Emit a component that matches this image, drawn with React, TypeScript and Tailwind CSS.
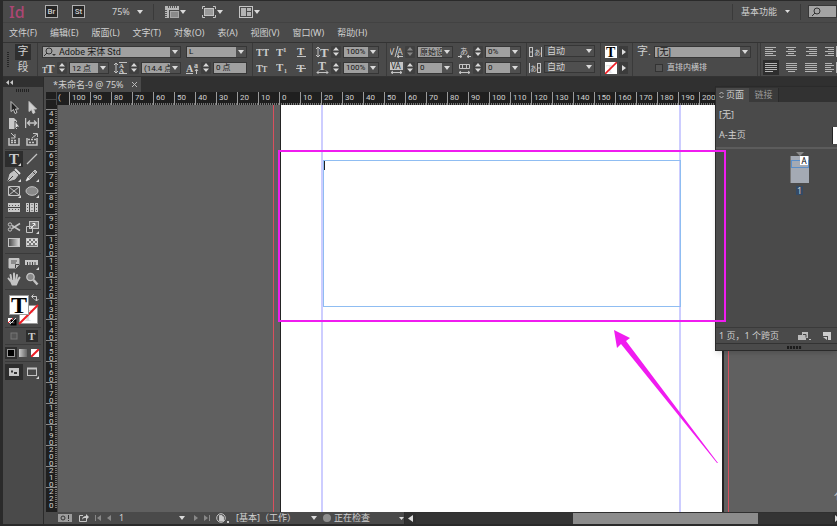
import React from 'react'

const MENUS = ['文件(F)', '编辑(E)', '版面(L)', '文字(T)', '对象(O)', '表(A)', '视图(V)', '窗口(W)', '帮助(H)']

const H_MARKS = [100, 90, 80, 70, 60, 50, 40, 30, 20, 10, 0, 10, 20, 30, 40, 50, 60, 70, 80, 90, 100, 110, 120, 130, 140, 150, 160, 170, 180, 190, 200, 210, 220, 230, 240, 250]
const V_MARKS = Array.from({ length: 19 }, (_, i) => 40 + i * 10)

interface IconProps {
  children: React.ReactNode
  w?: number
  h?: number
}

const Icon: React.FC<IconProps> = ({ children, w = 14, h = 14 }) => (
  <svg width={w} height={h} viewBox={`0 0 ${w} ${h}`} fill="none" stroke="#c4c4c4" strokeWidth="1" className="shrink-0" aria-hidden="true">
    {children}
  </svg>
)

interface GlyphProps {
  x: number
  y: number
  size: number
  children: string
  sans?: boolean
  fill?: string
}

const Glyph: React.FC<GlyphProps> = ({ x, y, size, children, sans, fill = '#cccccc' }) => (
  <text x={x} y={y} fontSize={size} fill={fill} stroke="none" fontFamily={sans ? 'Noto Sans, Noto Sans CJK SC, sans-serif' : 'Liberation Serif, serif'} fontWeight={sans ? 400 : 700}>
    {children}
  </text>
)

const Caret = () => (
  <svg width="6" height="4" viewBox="0 0 6 4" className="shrink-0" aria-hidden="true">
    <path d="M0 0h6L3 4z" fill="#dadada" />
  </svg>
)

const Corner = () => <path d="M14 11v3h-3z" fill="#d8d8d8" stroke="none" />

const Spinner = ({ label, dim = false }: { label: string; dim?: boolean }) => (
  <button aria-label={label} className="flex h-3 w-[10px] shrink-0 items-center justify-center rounded-[1px] bg-[#404040]">
    <svg width="6" height="9" viewBox="0 0 6 9" aria-hidden="true">
      <path d="M0 3.5L3 0l3 3.5zM0 5.5L3 9l3-3.5z" fill={dim ? '#858585' : '#d8d8d8'} />
    </svg>
  </button>
)

interface ComboProps {
  label: string
  value: string
  width: string
  pad?: string
  icon?: React.ReactNode
}

const Combo: React.FC<ComboProps> = ({ label, value, width, pad = 'pl-[2px]', icon }) => (
  <div className={`flex h-3 shrink-0 border border-[#363636] bg-[#a0a0a0] ${width}`}>
    {icon}
    <input aria-label={label} defaultValue={value} className={`h-full min-w-0 flex-1 bg-transparent text-[#161616] outline-none ${pad}`} />
    <button aria-label={`${label}列表`} className="flex w-[10px] shrink-0 items-center justify-center bg-[#505050]">
      <Caret />
    </button>
  </div>
)

const Group = ({ children, className = 'px-1' }: { children: React.ReactNode; className?: string }) => (
  <div className={`flex shrink-0 flex-col justify-center gap-1 border-r border-[#3a3a3a] ${className}`}>{children}</div>
)

const Row = ({ children, gap = 'gap-[5px]' }: { children: React.ReactNode; gap?: string }) => (
  <div className={`flex h-3 items-center ${gap}`}>{children}</div>
)

const Field = ({ children }: { children: React.ReactNode }) => <div className="flex items-center gap-[2px]">{children}</div>

const TypeButton = ({ label, children }: { label: string; children: React.ReactNode }) => (
  <button aria-label={label}>
    <Icon w={13} h={12}>{children}</Icon>
  </button>
)

const AlignButton = ({ label, d, active = false }: { label: string; d: string; active?: boolean }) => (
  <button aria-label={label} className={active ? 'bg-[#2e2e2e] outline-2 outline-[#2e2e2e]' : ''}>
    <Icon w={12} h={11}>
      <path d={d} stroke="#b4b4b4" />
    </Icon>
  </button>
)

const AppBar = () => (
  <header className="flex h-[22px] shrink-0 items-center border-b border-[#424242] pl-[6px] text-[9px]">
    <span className="w-[36px] text-[16px] leading-none font-medium text-[#ad4674]">Id</span>
    <button className="mr-[14px] h-[13px] w-[13px] border border-[#b0b0b0] bg-[#262626] font-['Roboto',sans-serif] text-[8px] leading-[11px] font-medium text-[#cfcfcf]">Br</button>
    <button className="h-[13px] w-[13px] border border-[#b0b0b0] bg-[#262626] font-['Roboto',sans-serif] text-[8px] leading-[11px] font-medium text-[#cfcfcf]">St</button>
    <button className="ml-[27px] flex items-center gap-[7px]">75%<Caret /></button>
    <span className="mr-[11px] ml-[10px] h-4 w-px bg-[#3a3a3a]" />
    <button aria-label="视图选项" className="mr-4 flex items-center gap-[1px]">
      <Icon w={14} h={12}>
        <path d="M0 0h14v4H4v8H0z" fill="#b8b8b8" stroke="none" />
        <path d="M3.500 0v2M5.500 0v2M7.500 0v2M9.500 0v2M11.500 0v2M0 4.500h2M0 6.500h2M0 8.500h2M0 10.500h2" stroke="#555" />
        <rect x="5.500" y="5.500" width="8" height="6" fill="#8a8a8a" stroke="#a8a8a8" />
      </Icon>
      <Caret />
    </button>
    <button aria-label="屏幕模式" className="mr-4 flex items-center gap-[1px]">
      <Icon w={14} h={12}>
        <path d="M.5 3V.5H3M11 .5h2.500V3M13.500 9v2.500H11M3 11.500H.5V9" />
        <rect x="2.500" y="2.500" width="9" height="7" fill="#9a9a9a" />
      </Icon>
      <Caret />
    </button>
    <button aria-label="排列文档" className="flex items-center gap-[1px]">
      <Icon w={14} h={12}>
        <rect x=".5" y=".5" width="13" height="11" />
        <path d="M2 2h5v8H2zM8 2h4v3H8zM8 6h4v4H8z" fill="#b4b4b4" stroke="none" />
      </Icon>
      <Caret />
    </button>
    <button className="ml-auto flex h-4 items-center gap-2 border-x border-[#3a3a3a] pr-[10px] pl-2">
      基本功能
      <svg width="5" height="3" viewBox="0 0 5 3" aria-hidden="true"><path d="M0 0h5L2.500 3z" fill="#ddd" /></svg>
    </button>
    <label className="ml-[7px] flex h-[13px] w-[29px] items-center overflow-hidden border border-[#383838] bg-[#a4a4a4] pl-[2px]">
      <Icon w={10} h={10}><circle cx="6" cy="4" r="3" stroke="#333" /><path d="M4 6L1 9" stroke="#333" /></Icon>
      <input aria-label="搜索" className="w-4 bg-transparent outline-none" />
    </label>
  </header>
)

const ControlPanel = () => (
  <section aria-label="控制" className="flex h-[35px] shrink-0 overflow-hidden border-y border-[#333333] font-['Roboto','Noto_Sans_CJK_SC',sans-serif] text-[8px]">
    <div className="my-auto ml-1 h-4 w-[2px] shrink-0 bg-[repeating-linear-gradient(#242424_0_1px,#4a4a4a_1px_2px)]" />
    <div className="ml-[6px] flex shrink-0 flex-col justify-center border-r border-[#3a3a3a] pr-[6px] text-[11px]">
      <button className="h-4 w-4 bg-[#2f2f2f] leading-[14px]">字</button>
      <button className="h-4 w-4 leading-[15px]">段</button>
    </div>
    <Group className="pl-1 pr-[5px]">
      <Row>
        <Combo
          label="字体"
          value="Adobe 宋体 Std"
          width="w-[139px]"
          pad="pl-[3px] text-[9px]"
          icon={<Icon w={13} h={10}><circle cx="6" cy="4" r="3" stroke="#333" /><path d="M4 6L1 9" stroke="#333" /><path d="M9 7h4l-2 2z" fill="#333" stroke="none" /></Icon>}
        />
        <Combo label="字体样式" value="L" width="w-[61px]" />
      </Row>
      <Row>
        <Field>
          <Icon w={13} h={12}><Glyph x={4} y={11} size={13}>T</Glyph><Glyph x={0} y={11} size={8}>T</Glyph></Icon>
          <Spinner label="字号增减" />
          <Combo label="字号" value="12 点" width="w-[40px]" />
        </Field>
        <Field>
          <Icon w={13} h={12}><path d="M5 .5h8M5 11.500h8M2 1v10M0 3l2-2 2 2M0 9l2 2 2-2" /><Glyph x={5} y={6} size={7}>A</Glyph><Glyph x={5} y={11} size={7}>A</Glyph></Icon>
          <Spinner label="行距增减" />
          <Combo label="行距" value="(14.4 点)" width="w-[40px]" />
        </Field>
        <Field>
          <Icon w={13} h={12}><Glyph x={0} y={10} size={10}>A</Glyph><Glyph x={8} y={6} size={8}>a</Glyph><path d="M10.500 12V7.500M9 9l1.500-2L12 9M0 11.500h7" /></Icon>
          <Spinner label="基线偏移增减" />
          <input aria-label="基线偏移" defaultValue="0 点" className="h-3 w-[34px] border border-[#363636] bg-[#a0a0a0] px-[2px] text-[#161616] outline-none" />
        </Field>
      </Row>
    </Group>
    <Group className="px-[3px]">
      <Row gap="gap-[7px]">
        <TypeButton label="全部大写字母"><Glyph x={0} y={10} size={10}>TT</Glyph></TypeButton>
        <TypeButton label="上标"><Glyph x={0} y={10} size={11}>T</Glyph><Glyph x={7} y={6} size={7}>1</Glyph></TypeButton>
        <TypeButton label="下划线"><Glyph x={1} y={9} size={11}>T</Glyph><path d="M1 10.500h9" /></TypeButton>
      </Row>
      <Row gap="gap-[7px]">
        <TypeButton label="小型大写字母"><Glyph x={0} y={10} size={10}>T</Glyph><Glyph x={6} y={10} size={8}>T</Glyph></TypeButton>
        <TypeButton label="下标"><Glyph x={0} y={9} size={11}>T</Glyph><Glyph x={8} y={11} size={6}>1</Glyph></TypeButton>
        <TypeButton label="删除线"><Glyph x={1} y={10} size={11}>T</Glyph><path d="M0 6.500h10" /></TypeButton>
      </Row>
    </Group>
    <Group className="pl-[3px] pr-[7px]">
      <Row>
        <Field>
          <Icon w={13} h={12}><Glyph x={4} y={11} size={13}>T</Glyph><path d="M2 1v10M0 3l2-2 2 2M0 9l2 2 2-2" /></Icon>
          <Spinner label="垂直缩放增减" />
          <Combo label="垂直缩放" value="100%" width="w-[36px]" />
        </Field>
      </Row>
      <Row>
        <Field>
          <Icon w={13} h={12}><Glyph x={2} y={8} size={12}>T</Glyph><path d="M1 10.500h11M3 8.500l-2 2 2 2M10 8.500l2 2-2 2" /></Icon>
          <Spinner label="水平缩放增减" />
          <Combo label="水平缩放" value="100%" width="w-[36px]" />
        </Field>
      </Row>
    </Group>
    <Group className="pl-[3px] pr-[5px]">
      <Row>
        <Field>
          <Icon w={13} h={12}><Glyph x={-1} y={9} size={9} sans>V</Glyph><Glyph x={7} y={9} size={9} sans>A</Glyph><path d="M8 0L5 11M7 10.500h6M9 9l-2 1.500 2 1.500" /></Icon>
          <Spinner label="字偶间距增减" dim />
          <Combo label="字偶间距" value="原始设定" width="w-[36px]" />
        </Field>
        <Field>
          <Icon w={13} h={12}><Glyph x={2} y={8} size={8} sans>あ</Glyph><path d="M0 10.500h4M2 9l2 1.500-2 1.500M13 10.500H9M11 9l-2 1.500 2 1.500" /></Icon>
          <Spinner label="比例间距增减" />
          <Combo label="比例间距" value="0%" width="w-[36px]" />
        </Field>
      </Row>
      <Row>
        <Field>
          <Icon w={13} h={12}><rect x="0" y="0" width="13" height="8" fill="#c4c4c4" stroke="none" /><Glyph x={1} y={7} size={8} sans fill="#222">VA</Glyph><path d="M1 10.500h11M3 9l-2 1.500 2 1.500M10 9l2 1.500-2 1.500" /></Icon>
          <Spinner label="字符间距增减" />
          <Combo label="字符间距" value="0" width="w-[36px]" />
        </Field>
        <Field>
          <Icon w={13} h={12}><path d="M1.500 2.500h10v4h-10zM4.500 2.500v4M8.500 2.500v4M1 10.500h11M3 9l-2 1.500 2 1.500M10 9l2 1.500-2 1.500" /></Icon>
          <Spinner label="网格指定格数增减" />
          <Combo label="网格指定格数" value="0" width="w-[36px]" />
        </Field>
      </Row>
    </Group>
    <Group className="pl-[2px] pr-[5px]">
      {['字符前挤压间距', '字符后挤压间距'].map((label, i) => (
        <Row key={label}>
          <Field>
            <Icon w={13} h={12}>
              <rect x={i ? 8.5 : 0.5} y="1.500" width="3" height="9" />
              <path d={i ? 'M.5 1v10M9 6h2' : 'M12.500 1v10M1 6h2'} />
              <Glyph x={i ? 1 : 5} y={9} size={7} sans>あ</Glyph>
            </Icon>
            <div className="relative">
              <select aria-label={label} className="h-3 w-[51px] appearance-none border border-[#363636] bg-[#4f4f4f] pl-[2px] text-[9px] leading-[10px] text-[#d4d4d4] outline-none">
                <option>自动</option>
              </select>
              <span className="pointer-events-none absolute top-1 right-[3px]"><Caret /></span>
            </div>
          </Field>
        </Row>
      ))}
    </Group>
    <Group className="px-1">
      <Row gap="gap-[2px]">
        <button aria-label="填色" className="h-3 w-3 bg-white"><Icon w={12} h={12}><Glyph x={1} y={11} size={14} fill="#000">T</Glyph></Icon></button>
        <button aria-label="填色选项" className="flex h-3 w-[9px] items-center justify-center bg-[#3c3c3c]"><Icon w={4} h={6}><path d="M0 0l4 3-4 3z" fill="#ddd" stroke="none" /></Icon></button>
      </Row>
      <Row gap="gap-[2px]">
        <button aria-label="描边" className="h-3 w-3 bg-white"><Icon w={12} h={12}><Glyph x={1} y={11} size={12} fill="#e4e4e4">T</Glyph><path d="M0 12L12 0" stroke="#ed1c24" strokeWidth="1.600" /></Icon></button>
        <button aria-label="描边选项" className="flex h-3 w-[9px] items-center justify-center bg-[#3c3c3c]"><Icon w={4} h={6}><path d="M0 0l4 3-4 3z" fill="#ddd" stroke="none" /></Icon></button>
      </Row>
    </Group>
    <Group className="pl-1 pr-[6px]">
      <Row>
        <span className="w-[12px] text-[11px] leading-3 whitespace-nowrap">字.</span>
        <Combo label="字符样式" value="[无]" width="w-[97px]" pad="pl-[2px] text-[9px]" />
      </Row>
      <Row>
        <label className="ml-[18px] flex items-center gap-1 whitespace-nowrap">
          <input type="checkbox" className="h-2 w-2 appearance-none border border-[#333333] bg-[#555555]" />
          直排内横排
        </label>
      </Row>
    </Group>
    <div className="ml-[2px] flex shrink-0 flex-col justify-center gap-1 border-l border-[#3a3a3a] pl-1">
      <Row gap="gap-2">
        <AlignButton label="左对齐" d="M0 1.500h11M0 3.500h8M0 5.500h11M0 7.500h8M0 9.500h11" />
        <AlignButton label="居中对齐" d="M1 1.500h10M3 3.500h6M1 5.500h10M3 7.500h6M1 9.500h10" />
        <AlignButton label="右对齐" d="M1 1.500h11M4 3.500h8M1 5.500h11M4 7.500h8M1 9.500h11" />
        <AlignButton label="朝向书脊对齐" d="M0 1.500h9M3 3.500h6M0 5.500h9M3 7.500h6M0 9.500h9M11.500 0v11" />
      </Row>
      <Row gap="gap-2">
        <AlignButton active label="双齐末行齐左" d="M0 1.500h12M0 3.500h12M0 5.500h12M0 7.500h12M0 9.500h8" />
        <AlignButton label="双齐末行居中" d="M1 1.500h11M1 3.500h11M1 5.500h11M1 7.500h11M3 9.500h7" />
        <AlignButton label="全部强制双齐" d="M0 1.500h12M0 3.500h12M0 5.500h12M0 7.500h12M0 9.500h12" />
        <AlignButton label="背向书脊对齐" d="M0 1.500h7M0 3.500h9M0 5.500h6M0 7.500h9M0 9.500h7M11.500 0v11" />
      </Row>
    </div>
  </section>
)

interface Tool {
  name: string
  art: React.ReactNode
  active?: boolean
}

const TOOL_GROUPS: Tool[][] = [
  [
    { name: '选择工具', art: <path d="M4 1.500v10l2.500-2 1.500 4 2-1-1.500-3.500h3z" fill="#222" /> },
    { name: '直接选择工具', art: <path d="M4 1.500v10l2.500-2 1.500 4 2-1-1.500-3.500h3z" fill="#d0d0d0" /> },
    { name: '页面工具', art: <><path d="M2 2h5l3 3v8H2z" fill="#c8c8c8" stroke="none" /><path d="M8 5v8l2-2h3z" fill="#dedede" stroke="#484848" /></> },
    { name: '间隙工具', art: <><path d="M.5 2v10M13.500 2v10" strokeWidth="1.500" /><path d="M3 7h8M5 4.500L2.500 7 5 9.500M9 4.500L11.500 7 9 9.500" strokeWidth="1.300" /></> },
    { name: '内容收集器工具', art: <><path d="M2 6v7h10V6" strokeWidth="1.500" /><path d="M4 8.500h6M4 10.500h6" strokeWidth="1.300" strokeDasharray="2 1" /><path d="M4 1l4 4M8 2v4H4" /></> },
    { name: '内容置入器工具', art: <><path d="M2 6v7h10V6" strokeWidth="1.500" /><path d="M3 7.500h8M4 10.500h6" strokeWidth="1.300" strokeDasharray="2 1" /><path d="M7 6l5-4M8 1.500h4.500V5" /></> },
  ],
  [
    { name: '文字工具', active: true, art: <><Glyph x={2} y={12} size={15}>T</Glyph><Corner /></> },
    { name: '直线工具', art: <path d="M2 12L12 2" strokeWidth="1.300" /> },
    { name: '钢笔工具', art: <><path d="M1 13l2-7 4-3 4 4-3 4z" fill="#c4c4c4" /><path d="M8 1l5 5" stroke="#ddd" strokeWidth="2" /><path d="M1 13l5-5" stroke="#444" /><Corner /></> },
    { name: '铅笔工具', art: <><path d="M1 13l2-4 7-7 2 2-7 7z" fill="#aaa" /><path d="M3 9l2 2M8 4l2 2" stroke="#444" /><path d="M1 13l2-4 2 2z" fill="#eee" stroke="none" /><Corner /></> },
    { name: '矩形框架工具', art: <><path d="M1.500 2.500h11v9h-11zM2 3l10 8M12 3L2 11" /><Corner /></> },
    { name: '椭圆工具', art: <><ellipse cx="7" cy="7" rx="6" ry="4.300" fill="#8a8a8a" /><Corner /></> },
    { name: '水平网格工具', art: <><rect x="1" y="3" width="12" height="9" fill="#c8c8c8" stroke="none" /><path d="M1 7.500h12" stroke="#444" /><path d="M2 5.500h10M2 9.500h10" stroke="#555" strokeDasharray="1 2" /></> },
    { name: '垂直网格工具', art: <><rect x="1" y="3" width="12" height="9" fill="#c8c8c8" stroke="none" /><path d="M4.500 3v9M9.500 3v9" stroke="#444" /><path d="M2.500 4v7M7 4v7M11.500 4v7" stroke="#555" strokeDasharray="1 2" /></> },
  ],
  [
    { name: '剪刀工具', art: <><path d="M5 8.500l8-5M5 5.500l8 5" strokeWidth="1.500" /><circle cx="3" cy="4.500" r="1.700" /><circle cx="3" cy="9.500" r="1.700" /></> },
    { name: '自由变换工具', art: <><rect x="4.500" y="1.500" width="9" height="7" fill="#777" /><path d="M1.500 6.500h6v6h-6z" /><path d="M6 8l4-4M7.500 3.500H10V6" stroke="#eee" /><Corner /></> },
    {
      name: '渐变色板工具',
      art: (
        <>
          <linearGradient id="swatch-fade"><stop stopColor="#444" /><stop offset="1" stopColor="#e0e0e0" /></linearGradient>
          <rect x="1.500" y="2.500" width="11" height="8" fill="url(#swatch-fade)" />
        </>
      ),
    },
    { name: '渐变羽化工具', art: <><rect x="1.500" y="2.500" width="11" height="8" fill="#777" /><path d="M2 4h10M4 6h9M2 8h10" stroke="#ddd" strokeWidth="2" strokeDasharray="2 2" /></> },
  ],
  [
    { name: '附注工具', art: <><path d="M2 2.500h10v6l-3 3.500H2z" fill="#c4c4c4" /><path d="M4 5h6M4 7h5" stroke="#555" /><path d="M8.500 12V8.500H12" stroke="#444" /></> },
    { name: '度量工具', art: <><rect x="0" y="4" width="13" height="5" fill="#c8c8c8" stroke="none" /><path d="M2.500 6v3M5 6v3M7.500 6v3M10 6v3" stroke="#444" /><Corner /></> },
    { name: '抓手工具', art: <path d="M3.500 9L1.500 6.500M4.500 8L3.500 3M7 7.500V1.500M9 8l1-5M10.500 9l2-3.500M5.500 12.500L4 9h6.500l-1.500 3.500z" fill="#c4c4c4" strokeWidth="2" strokeLinecap="round" strokeLinejoin="round" /> },
    { name: '缩放显示工具', art: <><circle cx="5.500" cy="5" r="3.700" fill="#888" strokeWidth="1.300" /><path d="M8.500 8l4 4.500" strokeWidth="2.500" /></> },
  ],
]

const ToolPanel = () => (
  <aside aria-label="工具" className="flex w-[41px] shrink-0 flex-col border-r border-[#2b2b2b]">
    <div className="flex h-[10px] items-center bg-[#303030] pl-[3px]">
      <Icon w={7} h={5}><path d="M3 0v5L0 2.500zM7 0v5L4 2.500z" fill="#c8c8c8" stroke="none" /></Icon>
    </div>
    <div className="mx-auto mt-[2px] mb-[7px] h-[3px] w-[14px] bg-[repeating-linear-gradient(90deg,#222_0_1px,#4a4a4a_1px_2px)]" />
    {TOOL_GROUPS.map((tools, i) => (
      <div key={i} className="mx-[2px] mb-[1px] grid grid-cols-2 border-b border-[#3a3a3a] pb-[2px]">
        {tools.map((tool) => (
          <button key={tool.name} aria-label={tool.name} className={`flex h-4 items-center justify-center ${tool.active ? 'bg-[#2d2d2d]' : ''}`}>
            <Icon>{tool.art}</Icon>
          </button>
        ))}
      </div>
    ))}
    <button aria-label="填色和描边" className="mx-auto mt-[2px] h-[34px] w-8">
      <svg width="32" height="34" viewBox="0 0 32 34" fill="none">
        <rect x="12.500" y="12.500" width="18" height="18" fill="#fff" stroke="#999" />
        <Glyph x={15} y={28} size={17} fill="#ddd">T</Glyph>
        <path d="M12 31L31 12" stroke="#ed1c24" strokeWidth="2" />
        <rect x="2.500" y="2.500" width="19" height="19" fill="#fff" stroke="#999" />
        <Glyph x={4} y={20} size={24} fill="#000">T</Glyph>
        <path d="M25 3.500h4.500V8M26.500 1.500l-2 2 2 2M27.500 6l2 2 2-2" stroke="#ccc" />
        <rect x="1" y="25" width="5" height="5" fill="#fff" />
        <path d="M1 30l5-5" stroke="#ed1c24" />
        <rect x="4.500" y="27.500" width="4" height="4" stroke="#000" strokeWidth="2" />
        <path d="M3 31l6-6" stroke="#ddd" />
      </svg>
    </button>
    <div className="mx-[2px] flex justify-around border-y border-[#3a3a3a] py-[2px]">
      <button aria-label="格式针对容器" className="flex h-3 w-3 items-center justify-center"><Icon w={8} h={8}><rect x="1" y="1" width="6" height="6" fill="#555" stroke="#777" /></Icon></button>
      <button aria-label="格式针对文本" className="flex h-3 w-3 items-center justify-center bg-[#2d2d2d]"><Icon w={8} h={9}><Glyph x={0} y={8} size={11}>T</Glyph></Icon></button>
    </div>
    <div className="mx-[2px] flex justify-between border-b border-[#3a3a3a] py-[2px]">
      <button aria-label="应用颜色" className="flex h-3 w-3 items-center justify-center bg-[#2d2d2d]"><span className="h-2 w-2 border border-[#999] bg-black" /></button>
      <button aria-label="应用渐变" className="flex h-3 w-3 items-center justify-center"><span className="h-2 w-2 bg-linear-to-r from-[#ccc] to-[#666]" /></button>
      <button aria-label="应用无" className="flex h-3 w-3 items-center justify-center"><Icon w={8} h={8}><rect width="8" height="8" fill="#fff" stroke="none" /><path d="M0 8l8-8" stroke="#ed1c24" strokeWidth="2" /></Icon></button>
    </div>
    <div className="mx-[2px] mt-[2px] grid grid-cols-2">
      <button aria-label="正常" className="flex h-4 items-center justify-center bg-[#2d2d2d]"><Icon w={10} h={9}><rect x=".5" y=".5" width="9" height="7" fill="#c8c8c8" /><path d="M2 2.500h2v2H2zM5 4h3v2H5z" fill="#333" stroke="none" /></Icon></button>
      <button aria-label="预览" className="flex h-4 items-center justify-center"><Icon><rect x="2.500" y="3.500" width="9" height="7" /><path d="M2 3.500h10" strokeWidth="2" /><Corner /></Icon></button>
    </div>
  </aside>
)

const HorizontalRuler = () => (
  <div className="flex h-[13px] shrink-0 overflow-hidden bg-[#1f1f1f] font-['Roboto',sans-serif] text-[8px] leading-[12px] text-[#d0d0d0]">
    <div className="w-[11px] shrink-0 border-r border-[#484848] bg-[linear-gradient(#484848,#484848)] bg-[length:100%_1px] bg-[position:0_60%] bg-no-repeat" />
    <div className="w-3 shrink-0 pl-[1px]">(</div>
    {H_MARKS.map((mark, i) => (
      <div key={i} className="w-[21px] shrink-0 border-l border-[#9a9a9a] bg-[repeating-linear-gradient(90deg,#1f1f1f_0_1px,#777_1px_2px)] bg-[length:100%_2px] bg-bottom bg-no-repeat pl-[2px]">
        {mark}
      </div>
    ))}
  </div>
)

const VerticalRuler = () => (
  <div className="h-full w-[12px] shrink-0 overflow-hidden border-r border-[#444] bg-[#1f1f1f] pt-1 font-['Roboto',sans-serif] text-[8px] text-[#d0d0d0]">
    {V_MARKS.map((mark) => (
      <div key={mark} className={`flex h-[21px] flex-col border-t border-[#8a8a8a] bg-[repeating-linear-gradient(#1f1f1f_0_1px,#777_1px_2px)] bg-[length:2px_100%] bg-right bg-no-repeat pl-[3px] ${mark < 100 ? 'leading-[8px]' : 'leading-[7px]'}`}>
        {String(mark).split('').map((digit, i) => <span key={i}>{digit}</span>)}
      </div>
    ))}
  </div>
)

const Pasteboard = () => (
  <main className="relative min-w-0 flex-1 overflow-hidden bg-[#606060]">
    <div className="absolute inset-y-0 left-[215px] w-[456px] border-x border-[#d9505e]" />
    <div className="absolute inset-y-0 left-[222px] w-[444px] border-r-2 border-l border-[#242424] bg-white">
      <div className="absolute inset-y-0 left-[40px] w-[360px] border-x-2 border-[#cdcdff]" />
      <div className="absolute top-[55px] left-[42px] h-[147px] w-[358px] border border-[#8fbdf2]">
        <span className="block h-[9px] w-px bg-[#222]" />
      </div>
    </div>
    <span className="absolute right-0 bottom-2 w-[3px] overflow-hidden text-[11px] text-[#c8c8c8]">亻</span>
  </main>
)

const StatusBar = () => (
  <footer className="flex h-3 shrink-0 items-center text-[9px] leading-3">
    <div className="flex w-[358px] shrink-0 items-center pl-3">
      <Icon w={14} h={8}><rect width="14" height="8" fill="#9c9c9c" stroke="none" /><circle cx="5" cy="4" r="2" stroke="#333" /><path d="M10.500 1v4M10.500 6v1" stroke="#333" /></Icon>
      <button aria-label="共享" className="ml-[6px]"><Icon w={11} h={10}><path d="M5 2.500H1.500v6h7V6" /><path d="M4 7c0-3 2-4 4-4V1l3 3-3 3V5C6 5 5 5 4 7z" fill="#ccc" stroke="none" /></Icon></button>
      <button aria-label="第一页" className="ml-[6px]"><Icon w={6} h={6}><path d="M.5 0v6" stroke="#888" /><path d="M6 0v6L2 3z" fill="#888" stroke="none" /></Icon></button>
      <button aria-label="上一页" className="ml-[6px]"><Icon w={4} h={6}><path d="M4 0v6L0 3z" fill="#888" stroke="none" /></Icon></button>
      <input aria-label="页码" defaultValue="1" className="ml-2 w-[58px] bg-transparent outline-none" />
      <button aria-label="页码列表" className="ml-[2px]"><Caret /></button>
      <button aria-label="下一页" className="ml-[9px]"><Icon w={4} h={6}><path d="M0 0v6l4-3z" fill="#888" stroke="none" /></Icon></button>
      <button aria-label="最后一页" className="ml-[6px]"><Icon w={6} h={6}><path d="M0 0v6l4-3z" fill="#888" stroke="none" /><path d="M5.500 0v6" stroke="#888" /></Icon></button>
      <button aria-label="打开" className="ml-[6px]"><Icon w={13} h={10}><circle cx="5" cy="5" r="4.300" /><path d="M3.500 2.500h2.500l1.500 1.500v4h-4z" fill="#ccc" /><path d="M11 8h2v2h-2z" fill="#ccc" stroke="none" /></Icon></button>
      <button className="ml-[7px] flex flex-1 items-center justify-between whitespace-nowrap">[基本]（工作）<Caret /></button>
      <span className="mr-[3px] ml-[6px] h-2 w-2 rounded-full bg-[#8e8e8e]" />
      <button className="flex w-[70px] items-center justify-between whitespace-nowrap">正在检查<svg width="5" height="3" viewBox="0 0 5 3" aria-hidden="true"><path d="M0 0h5L2.500 3z" fill="#ddd" /></svg></button>
    </div>
    <div className="flex h-full min-w-0 flex-1 items-center border-l border-[#2b2b2b] bg-[#303030] pl-[3px]">
      <button aria-label="向左滚动" className="mr-[3px]"><Icon w={5} h={7}><path d="M5 0v7L0 3.500z" fill="#ddd" stroke="none" /></Icon></button>
      <div className="flex h-[11px] flex-1 bg-[#343434] pr-[75px] pl-[157px]">
        <div className="flex-1 bg-[#8c8c8c]" />
      </div>
      <button aria-label="向右滚动" className="w-1 shrink-0"><Icon w={4} h={7}><path d="M2 0v7l4-3.500z" fill="#ddd" stroke="none" /></Icon></button>
    </div>
  </footer>
)

const PagesPanel = () => (
  <section aria-label="页面面板" className="absolute top-[85px] right-0 flex h-[265px] w-[122px] flex-col overflow-hidden border border-r-0 border-[#2a2a2a] bg-[#4a4a4a] text-[9px] shadow-md">
    <div className="flex h-[15px] shrink-0 bg-[#323232] pt-[1px]">
      <button className="flex w-[33px] items-center gap-[2px] bg-[#4a4a4a] pl-[3px] whitespace-nowrap">
        <svg width="5" height="8" viewBox="0 0 5 8" fill="none" stroke="#bbb" aria-hidden="true"><path d="M.5 3l2-2 2 2M.5 5l2 2 2-2" /></svg>
        页面
      </button>
      <button className="w-[30px] border-r border-[#2a2a2a] bg-[#3a3a3a] text-[#999]">链接</button>
    </div>
    <div className="flex h-[21px] shrink-0 items-center pt-1 pl-[3px]">[无]</div>
    <div className="flex h-[26px] shrink-0 items-center justify-between border-b-2 border-[#5c5c5c] pl-[3px]">
      A-主页
      <span className="h-[17px] w-[5px] border-l border-[#222] bg-white" />
    </div>
    <div className="flex flex-1 flex-col items-center pt-[3px] pl-[46px]">
      <Icon w={8} h={4}><path d="M0 0h8L4 4z" fill="#888" stroke="none" /></Icon>
      <div className="h-[27px] w-[19px] border-l border-[#777] bg-[#a4aab4]">
        <div className="mt-1 flex h-2 justify-end border border-[#5b8fc9]">
          <span className="-mt-[5px] h-[9px] w-2 bg-white text-center text-[8px] leading-[9px] text-black">A</span>
        </div>
      </div>
      <span className="mt-[3px] bg-[#334a66] px-[1px] leading-[9px]">1</span>
    </div>
    <div className="flex h-4 shrink-0 items-center border-t border-[#3a3a3a] pl-[3px]">
      1 页，1 个跨页
      <button aria-label="编辑页面大小" className="ml-auto"><Icon w={13} h={10}><path d="M4 1h6v6H4zM0 4h8v5H0z" fill="#bbb" stroke="none" /><path d="M5 3.500h3v3" stroke="#444" /><path d="M11 8.500h2" /></Icon></button>
      <button aria-label="新建页面" className="mr-[6px] ml-3"><Icon w={8} h={8}><path d="M0 0h8v8H5V4H0z" fill="#ccc" stroke="none" /><path d="M0 5l4 3V5z" fill="#ccc" stroke="none" /></Icon></button>
    </div>
    <div className="flex h-[7px] shrink-0 items-center justify-center border-t border-[#333] pl-[36px]">
      <span className="h-[3px] w-[15px] bg-[repeating-linear-gradient(90deg,#1c1c1c_0_2px,#444_2px_3px)]" />
    </div>
  </section>
)

const App: React.FC = () => (
  <div className="relative flex h-screen flex-col overflow-hidden border-t border-b-2 border-l-[3px] border-[#2a2a2a] bg-[#4a4a4a] font-['Noto_Sans','Noto_Sans_CJK_SC',sans-serif] text-[#d0d0d0]">
    <AppBar />
    <nav className="flex h-[19px] shrink-0 items-center gap-[13px] pl-[6px] text-[9px] whitespace-nowrap">
      {MENUS.map((menu) => <button key={menu}>{menu}</button>)}
    </nav>
    <ControlPanel />
    <div className="flex min-h-0 flex-1">
      <ToolPanel />
      <div className="flex min-w-0 flex-1 flex-col pl-[2px]">
        <div className="flex h-[15px] shrink-0 bg-[#303030] text-[9px]">
          <button className="flex items-center gap-2 bg-[#4a4a4a] pr-1 pl-[7px] whitespace-nowrap">
            *未命名-9 @ 75%
            <svg width="5" height="5" viewBox="0 0 5 5" stroke="#bbb" aria-hidden="true"><path d="M0 0l5 5M5 0L0 5" /></svg>
          </button>
        </div>
        <HorizontalRuler />
        <div className="flex min-h-0 flex-1">
          <VerticalRuler />
          <Pasteboard />
        </div>
        <StatusBar />
      </div>
    </div>
    <PagesPanel />
    <div className="pointer-events-none absolute top-[149px] left-[275px] h-[172px] w-[448px] border-2 border-[#f01cf0]" />
    <svg width="106" height="136" viewBox="0 0 106 136" className="pointer-events-none absolute top-[328px] left-[610px]" aria-hidden="true">
      <path d="M1 1l16 8-4 3 92 122-1 0L8 15l-4 4z" fill="#f01cf0" />
    </svg>
  </div>
)

export default App
